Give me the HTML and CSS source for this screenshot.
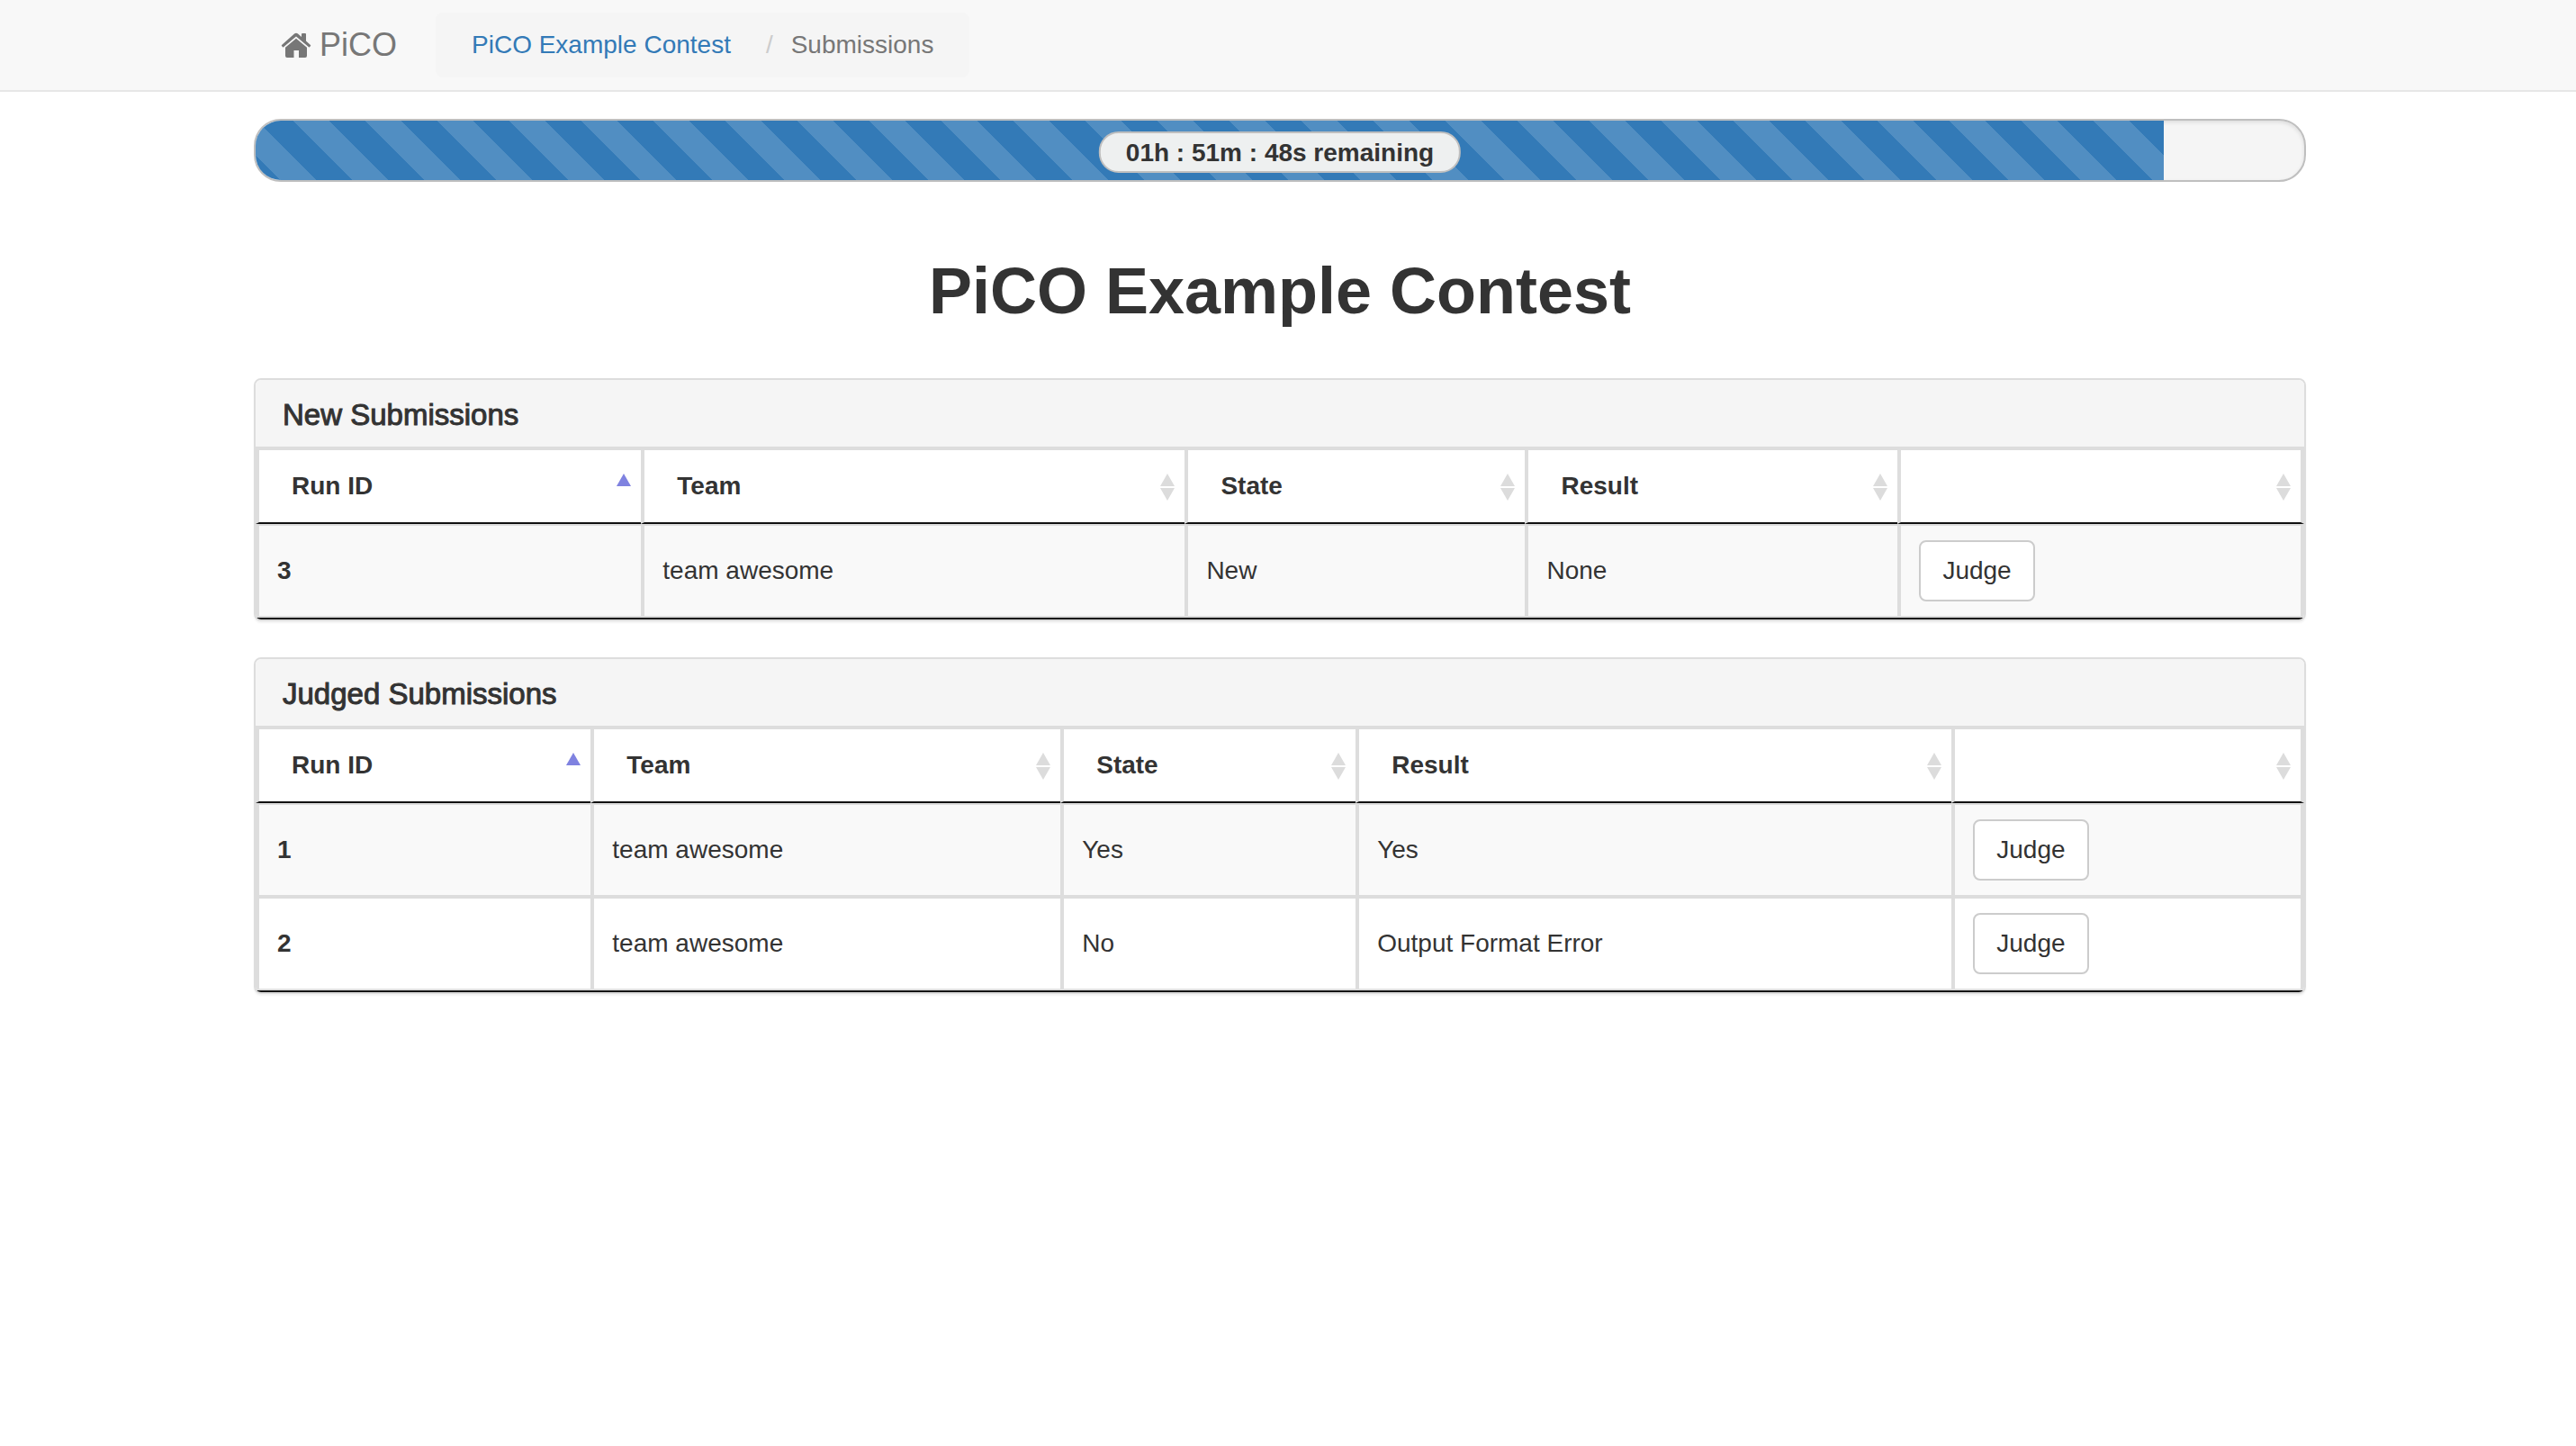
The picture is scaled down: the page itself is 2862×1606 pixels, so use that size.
FILE: index.html
```html
<!DOCTYPE html>
<html lang="en">
<head>
<meta charset="utf-8">
<title>PiCO Example Contest - Submissions</title>
<link rel="stylesheet" href="styles.css">
</head>
<body>
<svg class="sprites" aria-hidden="true">
  <symbol id="sort-both" viewBox="0 0 16 32"><path fill="#dcdcdc" d="M8 2 16 16H0zM0 18H16L8 32z"/></symbol>
  <symbol id="sort-asc" viewBox="0 0 16 32"><path fill="#7f82e0" d="M8 2 16 16H0z"/></symbol>
</svg>

<header class="navbar">
  <div class="container navbar-inner">
    <a class="brand" href="#">
      <svg class="brand-icon" viewBox="0 0 34 28" aria-hidden="true"><path fill="currentColor" d="M15 1.500Q17 0 19 1.500L23 5V2Q23 1 24 1H27Q28 1 28 2V9.500L33 14Q33.500 14.600 33 15L32 16.200Q31.500 16.600 31 16.200L17 4.500 3 16.200Q2.500 16.600 2 16.200L1 15Q.500 14.600 1 14zM17 6.700 29 16.800V26Q29 28 27 28H20V20H14.500V28H7Q5 28 5 26V16.800z"/></svg>
      <span>PiCO</span>
    </a>
    <nav aria-label="Breadcrumb">
      <ol class="breadcrumb">
        <li><a href="#">PiCO Example Contest</a></li>
        <li class="current" aria-current="page">Submissions</li>
      </ol>
    </nav>
  </div>
</header>

<main>
  <div class="container">
    <div class="progress" role="progressbar" aria-label="Contest time" aria-valuemin="0" aria-valuemax="100" aria-valuenow="93">
      <div class="progress-bar" style="width: 93.15%"></div>
      <div class="time-left">01h : 51m : 48s remaining</div>
    </div>

    <h1>PiCO Example Contest</h1>

    <section class="panel">
      <h2 class="panel-title">New Submissions</h2>
      <table class="submissions">
        <colgroup><col style="width: 18.82%"><col style="width: 26.54%"><col style="width: 16.61%"><col style="width: 18.19%"><col></colgroup>
        <thead>
          <tr>
            <th scope="col"><button class="sort" type="button">Run ID<svg class="arrows"><use href="#sort-asc"/></svg></button></th>
            <th scope="col"><button class="sort" type="button">Team<svg class="arrows"><use href="#sort-both"/></svg></button></th>
            <th scope="col"><button class="sort" type="button">State<svg class="arrows"><use href="#sort-both"/></svg></button></th>
            <th scope="col"><button class="sort" type="button">Result<svg class="arrows"><use href="#sort-both"/></svg></button></th>
            <th scope="col"><button class="sort" type="button"><span></span><svg class="arrows"><use href="#sort-both"/></svg></button></th>
          </tr>
        </thead>
        <tbody>
          <tr><th scope="row">3</th><td>team awesome</td><td>New</td><td>None</td><td><button class="btn" type="button">Judge</button></td></tr>
        </tbody>
      </table>
    </section>

    <section class="panel">
      <h2 class="panel-title">Judged Submissions</h2>
      <table class="submissions">
        <colgroup><col style="width: 16.36%"><col style="width: 22.93%"><col style="width: 14.41%"><col style="width: 29.09%"><col></colgroup>
        <thead>
          <tr>
            <th scope="col"><button class="sort" type="button">Run ID<svg class="arrows"><use href="#sort-asc"/></svg></button></th>
            <th scope="col"><button class="sort" type="button">Team<svg class="arrows"><use href="#sort-both"/></svg></button></th>
            <th scope="col"><button class="sort" type="button">State<svg class="arrows"><use href="#sort-both"/></svg></button></th>
            <th scope="col"><button class="sort" type="button">Result<svg class="arrows"><use href="#sort-both"/></svg></button></th>
            <th scope="col"><button class="sort" type="button"><span></span><svg class="arrows"><use href="#sort-both"/></svg></button></th>
          </tr>
        </thead>
        <tbody>
          <tr><th scope="row">1</th><td>team awesome</td><td>Yes</td><td>Yes</td><td><button class="btn" type="button">Judge</button></td></tr>
          <tr><th scope="row">2</th><td>team awesome</td><td>No</td><td>Output Format Error</td><td><button class="btn" type="button">Judge</button></td></tr>
        </tbody>
      </table>
    </section>
  </div>
</main>
</body>
</html>
```
FILE: styles.css
```css
* { box-sizing: border-box; }

body {
  margin: 0;
  background: #fff;
  color: #333;
  font: 28px/40px "Helvetica Neue", Helvetica, "Liberation Sans", Arial, sans-serif;
}

a { color: #337ab7; text-decoration: none; }
button { font: inherit; color: inherit; }

.sprites { display: none; }

.navbar, main { padding-right: 18px; }

.container {
  max-width: 2280px;
  margin: 0 auto;
}

.navbar {
  background: #f8f8f8;
  border-bottom: 2px solid #e7e7e7;
}
.navbar-inner {
  display: flex;
  align-items: center;
  min-height: 100px;
  padding-left: 30px;
}
.brand {
  display: flex;
  align-items: center;
  gap: 9px;
  margin-right: 43px;
  color: #777;
  font-size: 36px;
}
.brand-icon { width: 34px; height: 28px; }

.breadcrumb {
  display: flex;
  margin: 0;
  padding: 16px 40px;
  list-style: none;
  background: #f5f5f5;
  border-radius: 8px;
}
.breadcrumb .current { color: #777; }
.breadcrumb .current::before {
  content: "/";
  padding: 0 20px 0 39px;
  color: #ccc;
}

.progress {
  position: relative;
  height: 70px;
  margin-top: 30px;
  overflow: hidden;
  background: #f5f5f5;
  border: 2px solid #bfbfbf;
  border-radius: 30px;
  box-shadow: inset 0 2px 4px rgba(0, 0, 0, .1);
}
.progress-bar {
  height: 100%;
  background: #337ab7 linear-gradient(45deg, rgba(255, 255, 255, .15) 25%, transparent 25%, transparent 50%, rgba(255, 255, 255, .15) 50%, rgba(255, 255, 255, .15) 75%, transparent 75%, transparent) 42px 0 / 80px 80px;
}
.time-left {
  position: absolute;
  top: 12px;
  left: 50%;
  transform: translateX(-50%);
  padding: 2px 28px 0;
  line-height: 40px;
  font-weight: bold;
  white-space: nowrap;
  background: #eef0f0;
  border: 2px solid #bfbfbf;
  border-radius: 22px;
}

h1 {
  margin: 81px 0 57px;
  font-size: 72px;
  line-height: 80px;
  text-align: center;
}

.panel {
  margin-bottom: 40px;
  overflow: hidden;
  border: 2px solid #ddd;
  border-radius: 8px;
  box-shadow: 0 2px 2px rgba(0, 0, 0, .05);
}
.panel-title {
  margin: 0;
  padding: 19px 30px 15px;
  background: #f5f5f5;
  border-bottom: 4px solid #ddd;
  font-size: 33px;
  line-height: 40px;
  font-weight: 400;
  -webkit-text-stroke: 1px currentColor;
}

.submissions {
  width: 100%;
  table-layout: fixed;
  border-collapse: separate;
  border-spacing: 0;
  border-bottom: 2px solid #111;
}
.submissions th,
.submissions td {
  padding: 16px 20px;
  border: 0 solid #ddd;
  border-left-width: 4px;
  text-align: left;
}
.submissions th:last-child,
.submissions td:last-child { border-right-width: 4px; }
.submissions thead th {
  padding: 20px 11px 20px 36px;
  border-bottom: 2px solid #111;
}
.submissions tbody th,
.submissions tbody td { border-bottom-width: 4px; }
.submissions tbody tr:first-child > * { border-top-width: 2px; }
.submissions tbody tr:last-child > * { border-bottom-width: 2px; }
.submissions tbody tr:nth-child(odd) { background: #f9f9f9; }

.sort {
  display: flex;
  align-items: center;
  justify-content: space-between;
  width: 100%;
  padding: 0;
  background: none;
  border: 0;
  font-weight: bold;
  cursor: pointer;
}
.arrows { width: 16px; height: 32px; }

.btn {
  display: block;
  padding: 12px 24px;
  background: #fff;
  border: 2px solid #ccc;
  border-radius: 8px;
  cursor: pointer;
}
```
